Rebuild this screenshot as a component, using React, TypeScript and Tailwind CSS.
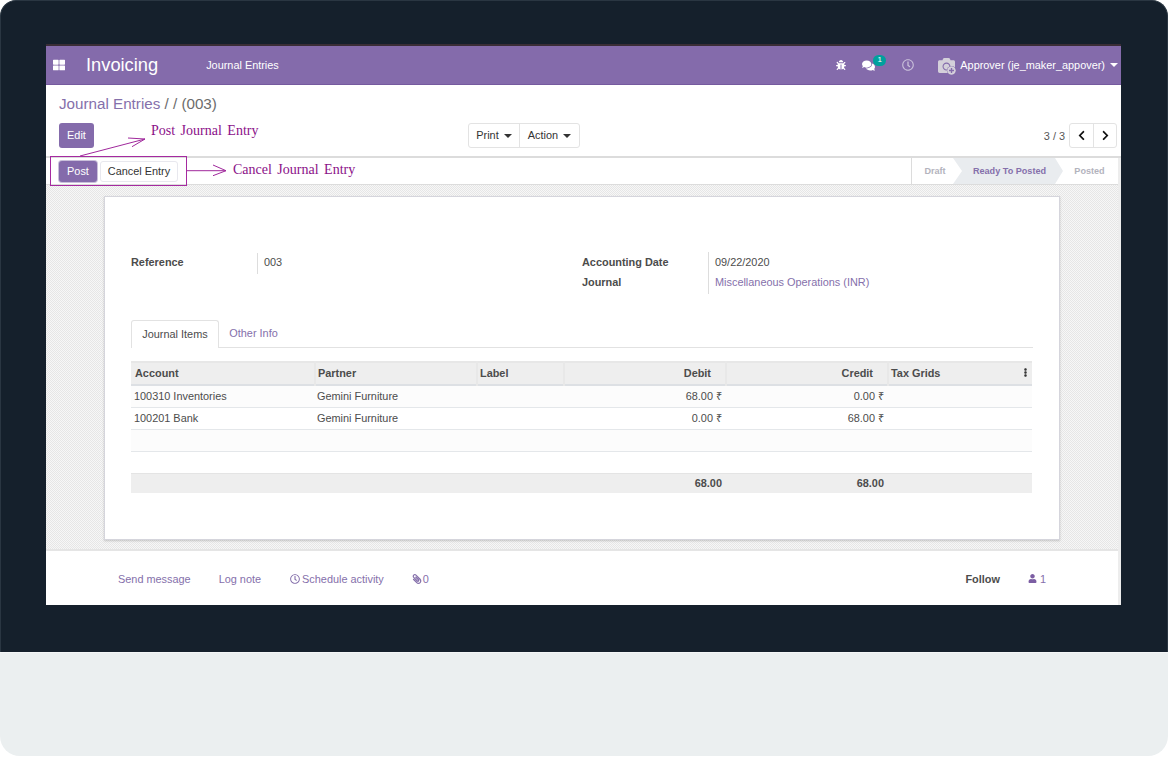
import { FaBug, FaCamera, FaChevronLeft, FaChevronRight, FaComments, FaEllipsisV, FaPaperclip, FaPlusCircle, FaRegClock, FaThLarge, FaUser } from "react-icons/fa";

const rows = [
  { account: "100310 Inventories", partner: "Gemini Furniture", debit: "68.00 ₹", credit: "0.00 ₹", bg: "bg-[#fcfcfc]" },
  { account: "100201 Bank", partner: "Gemini Furniture", debit: "0.00 ₹", credit: "68.00 ₹", bg: "bg-white" },
  { account: "", partner: "", debit: "", credit: "", bg: "bg-[#fcfcfc]" },
  { account: "", partner: "", debit: "", credit: "", bg: "bg-white" },
];

function Caret() {
  return <span className="ml-[5px] inline-block border-x-[4px] border-t-[4px] border-x-transparent border-t-current align-[2px]" />;
}

function Annotations() {
  return (
    <>
      <svg className="absolute left-0 top-0 pointer-events-none" width="1168" height="200" fill="none" stroke="#a0289c">
        <path d="M80 156 L145 139 M128 138 L145 139 L132 146.700" strokeWidth="1" />
        <path d="M186 170.700 H226 M213 165 L226 170.700 L213 175.700" strokeWidth="1" />
      </svg>
      <div className="absolute left-[50px] top-[156px] h-[30px] w-[137px] border border-[#a52aa0]" />
      <span className="absolute left-[151px] top-[122px] font-['Liberation_Serif',serif] text-[14px] leading-[18px] text-[#8b1089] [word-spacing:2px] whitespace-nowrap">Post Journal Entry</span>
      <span className="absolute left-[233px] top-[161px] font-['Liberation_Serif',serif] text-[14px] leading-[18px] text-[#8b1089] [word-spacing:2px] whitespace-nowrap">Cancel Journal Entry</span>
    </>
  );
}

export default function App() {
  return (
    <div className="relative flex h-[757px] w-[1168px] flex-col overflow-hidden bg-white font-['Liberation_Sans',Arial,sans-serif] text-[10.900px] text-[#4c4c4c]">
      {/* monitor */}
      <div className="h-[652px] rounded-t-[16px] border border-b-0 border-[#2a3642] bg-[#15202c] pl-[45px] pr-[46px] pt-[43px]">
        <div className="flex h-[561px] flex-col bg-white">
          <div className="h-[2px] bg-[#3a2d36]" />
          <nav className="flex h-[39px] shrink-0 items-center border-b border-[#755a9e] bg-[#846bab] text-white">
            <FaThLarge className="ml-[7px] text-[12px]" />
            <span className="ml-[21px] text-[18.300px]">Invoicing</span>
            <span className="ml-[48px]">Journal Entries</span>
            <div className="ml-auto flex items-center">
              <FaBug className="mr-[16px] text-[10px]" />
              <span className="relative mr-[27px]">
                <FaComments className="text-[13px]" />
                <span className="absolute -right-[11px] -top-[4px] flex h-[11px] w-[13px] items-center justify-center rounded-full bg-[#00a09d] text-[8px] leading-none">1</span>
              </span>
              <FaRegClock className="mr-[24px] text-[12px] text-[#c9c0da]" />
              <span className="relative mr-[5px] text-[#d4d0da]">
                <FaCamera className="text-[17px]" />
                <FaPlusCircle className="absolute -bottom-[1px] -right-[1px] rounded-full bg-[#846bab] text-[9px]" />
              </span>
              <span>Approver (je_maker_appover)</span>
              <Caret />
              <span className="w-[3px]" />
            </div>
          </nav>

          <div className="h-[73px] shrink-0 border-b-2 border-[#dcdcdc] pl-[13px] pr-[4px] pt-[8px]">
            <div className="text-[15.200px] leading-[22px] text-[#6c6c6c]">
              <span className="text-[#8570ab]">Journal Entries</span> / / (003)
            </div>
            <div className="mt-[8px] flex items-start">
              <button className="h-[25px] w-[35px] rounded-[3px] bg-[#846bab] text-white">Edit</button>
              <div className="ml-[374px] flex h-[25px] rounded-[3px] border border-[#e3e3e3] text-[#333]">
                <span className="flex w-[51px] items-center justify-center border-r border-[#e3e3e3]">Print<Caret /></span>
                <span className="flex w-[59px] items-center justify-center">Action<Caret /></span>
              </div>
              <span className="ml-auto mr-[4px] mt-[5px] text-[#555]">3 / 3</span>
              <div className="flex h-[25px] rounded-[3px] border border-[#e3e3e3] text-[#111]">
                <span className="flex w-[24px] items-center justify-center border-r border-[#e3e3e3]"><FaChevronLeft className="text-[11px]" /></span>
                <span className="flex w-[22px] items-center justify-center"><FaChevronRight className="text-[11px]" /></span>
              </div>
            </div>
          </div>

          <div className="flex min-h-0 flex-1">
            <div className="flex min-w-0 flex-1 flex-col">
              <div className="flex h-[27px] shrink-0 items-center border-b border-[#dcdcdc] pl-[13px]">
                <button className="h-[21px] w-[38px] rounded-[3px] bg-[#846bab] text-white ring-1 ring-[#c9c0da]">Post</button>
                <button className="ml-[3px] h-[21px] w-[78px] rounded-[3px] border border-[#e8e8ee] text-[#333]">Cancel Entry</button>
                <div className="ml-auto flex h-full items-stretch border-l border-[#dcdcdc] text-[9.100px] font-bold text-[#b3b3bd]">
                  <span className="flex w-[41px] items-center justify-center pl-[5px] pt-[1px]">Draft</span>
                  <div className="flex w-[110px] items-center justify-center bg-[#e9ecef] pl-[3px] pt-[1px] text-[#8570ab] [clip-path:polygon(0_0,calc(100%-8px)_0,100%_50%,calc(100%-8px)_100%,0_100%,9px_50%)]">Ready To Posted</div>
                  <span className="flex w-[53px] items-center justify-center pt-[1px]">Posted</span>
                  <span className="w-[2px]" />
                </div>
              </div>

              <div className="flex min-h-0 flex-1 flex-col items-center border-b-2 border-[#e5e5e5] [background-image:repeating-conic-gradient(#e6e6e6_0_25%,#f7f7f7_0_50%)] [background-size:2px_2px] pt-[11px]">
                <div className="h-[344px] w-[956px] border border-[#d5d5dc] bg-white px-[26px] pt-[54px] shadow-[0_1px_2px_rgba(0,0,0,0.18)]">
                  <div className="flex h-[69px]">
                    <div className="flex w-[451px] items-start">
                      <span className="w-[126px] pt-[3px] font-bold">Reference</span>
                      <span className="mt-[2px] h-[21px] border-l border-[#ddd] pl-[6px] pt-[1px]">003</span>
                    </div>
                    <div className="flex items-start">
                      <div className="w-[126px] pt-[1px] font-bold leading-[20px]">
                        <div>Accounting Date</div>
                        <div>Journal</div>
                      </div>
                      <div className="mt-[1px] h-[42px] border-l border-[#ddd] pl-[6px] leading-[20px]">
                        <div>09/22/2020</div>
                        <div className="text-[#8570ab]">Miscellaneous Operations (INR)</div>
                      </div>
                    </div>
                  </div>

                  <div className="flex h-[28px] border-b border-[#e2e2e2]">
                    <span className="z-10 flex h-[28px] w-[88px] items-center justify-center rounded-t-[3px] border border-b-0 border-[#e2e2e2] bg-white">Journal Items</span>
                    <span className="flex w-[69px] items-center justify-center text-[#8570ab]">Other Info</span>
                  </div>

                  <table className="mt-[13px] w-[901px] table-fixed border-collapse">
                    <colgroup>
                      <col className="w-[184px]" />
                      <col className="w-[162px]" />
                      <col className="w-[87px]" />
                      <col className="w-[162px]" />
                      <col className="w-[162px]" />
                      <col className="w-[144px]" />
                    </colgroup>
                    <thead>
                      <tr className="h-[23px] border-y-2 border-t-[#e7e7e7] border-b-[#dde0e4] bg-[#eeeeee] text-left font-bold">
                        <th className="border-r-2 border-[#e8e8e8] pb-[1px] pl-[4px]">Account</th>
                        <th className="border-r-2 border-[#e8e8e8] pb-[1px] pl-[2px]">Partner</th>
                        <th className="border-r-2 border-[#e8e8e8] pb-[1px] pl-[2px]">Label</th>
                        <th className="border-r-2 border-[#e8e8e8] pb-[1px] pr-[14px] text-right">Debit</th>
                        <th className="border-r-2 border-[#e8e8e8] pb-[1px] pr-[14px] text-right">Credit</th>
                        <th className="pb-[1px] pl-[2px]">
                          <div className="flex items-center justify-between pr-[2px]">Tax Grids<FaEllipsisV className="text-[9px] text-[#333]" /></div>
                        </th>
                      </tr>
                    </thead>
                    <tbody>
                      {rows.map((row, i) => (
                        <tr key={i} className={`h-[22px] border-b border-[#e4e7ea] ${i === 3 ? "border-b-0" : ""} ${row.bg}`}>
                          <td className="pl-[3px]">{row.account}</td>
                          <td className="pl-[2px]">{row.partner}</td>
                          <td />
                          <td className="pr-[4px] text-right">{row.debit}</td>
                          <td className="pr-[4px] text-right">{row.credit}</td>
                          <td />
                        </tr>
                      ))}
                      <tr className="h-[20px] border-t border-[#e4e4e4] bg-[#eeeeee] font-bold">
                        <td />
                        <td />
                        <td />
                        <td className="pr-[4px] text-right">68.00</td>
                        <td className="pr-[4px] text-right">68.00</td>
                        <td />
                      </tr>
                    </tbody>
                  </table>
                </div>
              </div>

              <div className="flex h-[54px] shrink-0 items-center pl-[72px] pr-[72px] pt-[2px] text-[#8570ab]">
                <span>Send message</span>
                <span className="ml-[28px]">Log note</span>
                <span className="ml-[29px] flex items-center gap-[2px]"><FaRegClock className="text-[10px]" />Schedule activity</span>
                <span className="ml-[28px] flex items-center gap-[1px]"><FaPaperclip className="-scale-x-100 text-[10px]" />0</span>
                <span className="ml-auto font-bold text-[#4c4c4c]">Follow</span>
                <span className="ml-[28px] flex items-center gap-[3px]"><FaUser className="text-[9px] text-[#7c5ea3]" />1</span>
              </div>
            </div>
            <div className="w-[3px] shrink-0 bg-[#ededed]" />
          </div>
        </div>
      </div>
      <div className="h-[104px] rounded-b-[20px] border-t border-[#f4f6f7] bg-[#ebeff0]" />
      <Annotations />
    </div>
  );
}
